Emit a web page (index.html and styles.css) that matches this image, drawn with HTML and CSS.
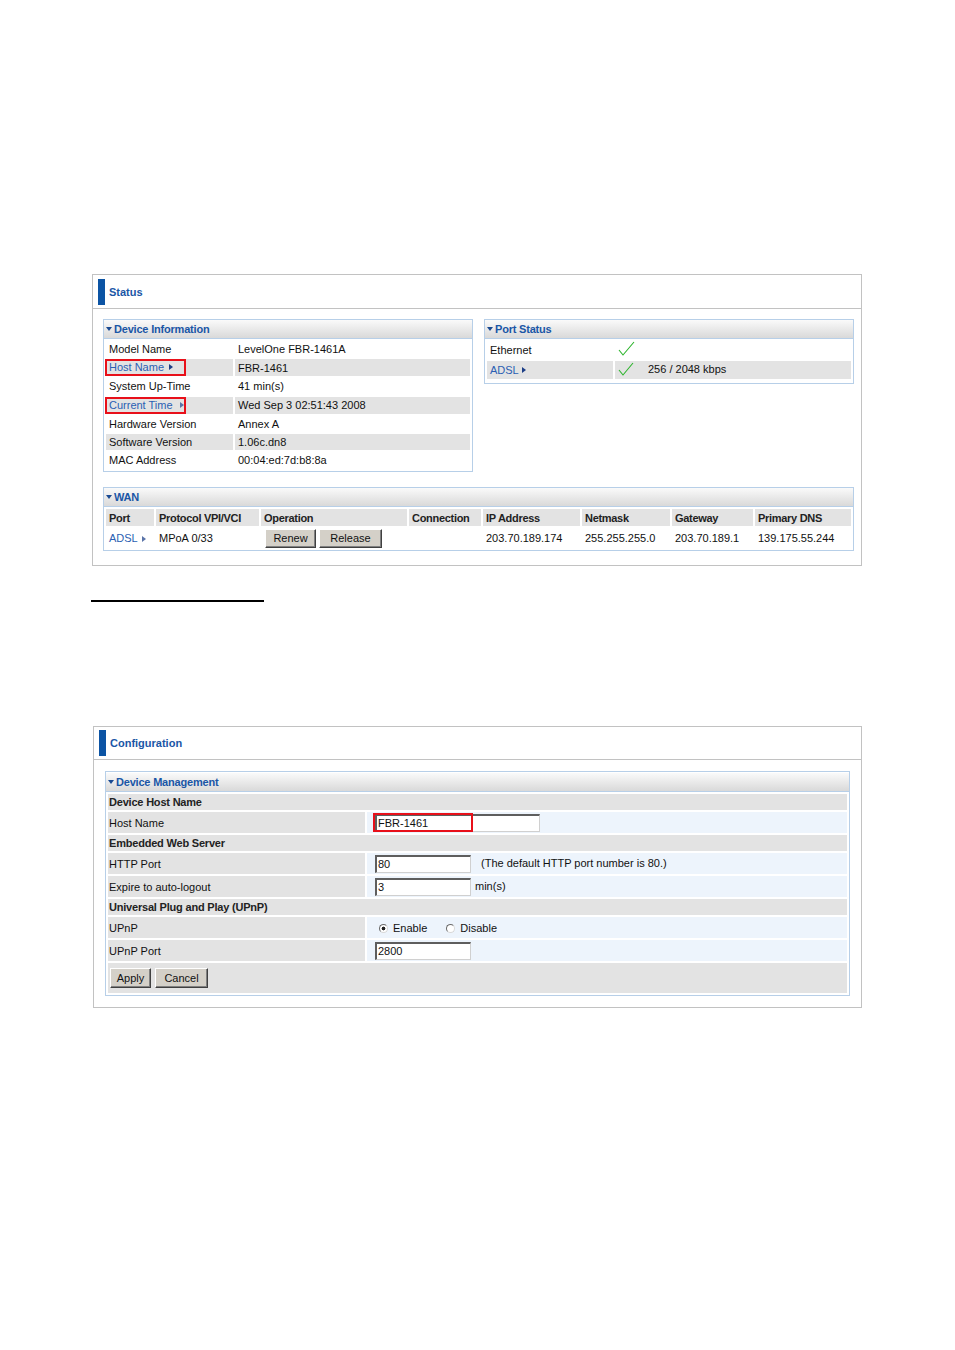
FILE: index.html
```html
<!DOCTYPE html>
<html lang="en">
<head>
    <meta charset="UTF-8">
    <meta name="viewport" content="width=device-width, initial-scale=1.0">
    <title>Status and Configuration</title>
    <link rel="stylesheet" href="styles.css">
</head>
<body>
<div class="page">

    <!-- Status page -->
    <div class="panel status">
        <div class="panel-title"><span class="bar"></span>Status</div>
        <div class="panel-body">
            <div class="top-row">
                <div class="box info">
                    <div class="box-head"><span class="tri"></span>Device Information</div>
                    <table class="grid info-grid">
                        <colgroup><col class="c-lbl"><col></colgroup>
                        <tr><td>Model Name</td><td>LevelOne FBR-1461A</td></tr>
                        <tr class="alt"><td><span class="mark"><span class="link">Host Name</span> <span class="arr"></span></span></td><td>FBR-1461</td></tr>
                        <tr><td>System Up-Time</td><td>41 min(s)</td></tr>
                        <tr class="alt"><td><span class="mark"><span class="link">Current Time</span> <span class="arr light"></span></span></td><td>Wed Sep 3 02:51:43 2008</td></tr>
                        <tr><td>Hardware Version</td><td>Annex A</td></tr>
                        <tr class="alt"><td>Software Version</td><td>1.06c.dn8</td></tr>
                        <tr><td>MAC Address</td><td>00:04:ed:7d:b8:8a</td></tr>
                    </table>
                </div>

                <div class="box port">
                    <div class="box-head"><span class="tri"></span>Port Status</div>
                    <table class="grid port-grid">
                        <colgroup><col class="c-port"><col></colgroup>
                        <tr>
                            <td>Ethernet</td>
                            <td><svg class="check" width="17" height="16" viewBox="0 0 17 16"><polyline points="1,9 5,14 16,1" fill="none" stroke="#2cb42c" stroke-width="1.1"/></svg></td>
                        </tr>
                        <tr class="alt">
                            <td><span class="link">ADSL</span><span class="arr tight"></span></td>
                            <td><svg class="check" width="17" height="16" viewBox="0 0 17 16"><polyline points="1,9 5,14 15,2" fill="none" stroke="#2cb42c" stroke-width="1.1"/></svg><span class="rate">256 / 2048 kbps</span></td>
                        </tr>
                    </table>
                </div>
            </div>

            <div class="box wan">
                <div class="box-head"><span class="tri"></span>WAN</div>
                <table class="grid wan-grid">
                    <tr class="head">
                        <th class="w-port">Port</th>
                        <th class="w-proto">Protocol VPI/VCI</th>
                        <th class="w-op">Operation</th>
                        <th class="w-conn">Connection</th>
                        <th class="w-ip">IP Address</th>
                        <th class="w-mask">Netmask</th>
                        <th class="w-gw">Gateway</th>
                        <th>Primary DNS</th>
                    </tr>
                    <tr class="data">
                        <td><span class="link">ADSL</span><span class="arr light"></span></td>
                        <td>MPoA 0/33</td>
                        <td class="ops"><button class="btn renew">Renew</button><button class="btn release">Release</button></td>
                        <td></td>
                        <td>203.70.189.174</td>
                        <td>255.255.255.0</td>
                        <td>203.70.189.1</td>
                        <td>139.175.55.244</td>
                    </tr>
                </table>
            </div>
        </div>
    </div>

    <div class="rule"></div>

    <!-- Configuration page -->
    <div class="panel config">
        <div class="panel-title"><span class="bar"></span>Configuration</div>
        <div class="panel-body">
            <div class="box mgmt">
                <div class="box-head"><span class="tri"></span>Device Management</div>
                <table class="grid form-grid">
                    <colgroup><col class="c-field"><col></colgroup>
                    <tr class="section"><td colspan="2">Device Host Name</td></tr>
                    <tr class="field">
                        <td>Host Name</td>
                        <td class="val"><span class="hl-wrap"><input class="txt long" type="text" value="FBR-1461"><span class="hl"></span></span></td>
                    </tr>
                    <tr class="section"><td colspan="2">Embedded Web Server</td></tr>
                    <tr class="field">
                        <td>HTTP Port</td>
                        <td class="val"><input class="txt" type="text" value="80"><span class="note">(The default HTTP port number is 80.)</span></td>
                    </tr>
                    <tr class="field">
                        <td>Expire to auto-logout</td>
                        <td class="val"><input class="txt" type="text" value="3"><span class="unit">min(s)</span></td>
                    </tr>
                    <tr class="section"><td colspan="2">Universal Plug and Play (UPnP)</td></tr>
                    <tr class="field">
                        <td>UPnP</td>
                        <td class="val radios">
                            <span class="radio on"></span><span class="opt">Enable</span>
                            <span class="radio"></span><span class="opt">Disable</span>
                        </td>
                    </tr>
                    <tr class="field">
                        <td>UPnP Port</td>
                        <td class="val"><input class="txt" type="text" value="2800"></td>
                    </tr>
                    <tr class="actions">
                        <td colspan="2"><button class="btn apply">Apply</button><button class="btn cancel">Cancel</button></td>
                    </tr>
                </table>
            </div>
        </div>
    </div>

</div>
</body>
</html>
```

FILE: styles.css
```css
body {
    margin: 0;
    font-family: "Liberation Sans", Arial, sans-serif;
    font-size: 11px;
    color: #111;
    background-color: #fff;
}

.page {
    padding: 274px 0 0 92px;
}

/* Outer page panels */
.panel {
    border: 1px solid #c2c2c2;
}

.status {
    width: 768px;
}

.config {
    width: 767px;
    margin-left: 1px;
}

.panel-title {
    display: flex;
    align-items: center;
    height: 33px;
    padding-left: 5px;
    border-bottom: 1px solid #c2c2c2;
    font-weight: bold;
    color: #1a56a6;
}

.config .panel-title {
    height: 32px;
}

.panel-title .bar {
    width: 7px;
    height: 26px;
    background-color: #0c54a4;
    margin-right: 4px;
}

.status .panel-body {
    padding: 10px 7px 14px 10px;
}

.config .panel-body {
    padding: 11px;
}

.top-row {
    display: flex;
    align-items: flex-start;
    margin-bottom: 15px;
}

/* Boxes with a grey gradient head */
.box {
    border: 1px solid #b7cfe8;
    background-color: #fff;
}

.box-head {
    height: 18px;
    line-height: 18px;
    padding-left: 2px;
    border-bottom: 1px solid #b7cfe8;
    background: linear-gradient(#fafafa, #d9d9d9);
    color: #1a56a6;
    font-weight: bold;
    letter-spacing: -0.2px;
}

.tri {
    display: inline-block;
    width: 0;
    height: 0;
    border-left: 3px solid transparent;
    border-right: 3px solid transparent;
    border-top: 4px solid #1a4a92;
    vertical-align: middle;
    margin: -3px 2px 0 0;
}

.info {
    width: 368px;
    padding-bottom: 1px;
}

.port {
    width: 368px;
    margin-left: 11px;
    padding-bottom: 2px;
}

.grid {
    width: 100%;
    border-collapse: separate;
    border-spacing: 2px;
    table-layout: fixed;
}

.grid td,
.grid th {
    padding: 0 0 0 3px;
    white-space: nowrap;
    overflow: visible;
    text-align: left;
    font-weight: normal;
}

.grid .alt td {
    background-color: #e3e3e3;
}

.info-grid .c-lbl {
    width: 127px;
}

.info-grid td {
    height: 16.3px;
}

.port-grid .c-port {
    width: 126px;
}

.port-grid td {
    height: 18px;
}

.link {
    color: #2b5fb3;
}

.arr {
    display: inline-block;
    width: 0;
    height: 0;
    border-top: 3px solid transparent;
    border-bottom: 3px solid transparent;
    border-left: 4px solid #1c3e86;
    vertical-align: middle;
    margin: -2px 0 0 2px;
}

.arr.light {
    border-left-color: #5a74a8;
    margin-left: 4px;
}

.arr.tight {
    margin-left: 3px;
}

.mark {
    display: inline-block;
    width: 75px;
    height: 13px;
    line-height: 13px;
    padding-left: 2px;
    margin-left: -4px;
    border: 2px solid #e8101a;
}

.check {
    vertical-align: middle;
    margin-top: -2px;
}

.rate {
    margin-left: 13px;
}

/* WAN table */
.wan-grid .head th {
    height: 17px;
    background-color: #e3e3e3;
    font-weight: bold;
    letter-spacing: -0.3px;
    color: #222;
}

.wan-grid .data td {
    height: 20px;
}

.w-port { width: 45px; }
.w-proto { width: 100px; }
.w-op { width: 143px; }
.w-conn { width: 69px; }
.w-ip { width: 94px; }
.w-mask { width: 85px; }
.w-gw { width: 78px; }

.wan-grid td.ops {
    padding-left: 4px;
}

.btn {
    font-family: "Liberation Sans", Arial, sans-serif;
    font-size: 11px;
    color: #111;
    background-color: #d4d0c8;
    border: 1px solid;
    border-color: #fff #404040 #404040 #fff;
    box-shadow: inset -1px -1px #808080;
    height: 19px;
    padding: 0;
    vertical-align: middle;
}

.renew {
    width: 51px;
}

.release {
    width: 63px;
    margin-left: 3px;
}

/* Configuration form */
.mgmt {
    width: 743px;
    padding-top: 1px;
}

.form-grid .c-field {
    width: 257px;
}

.form-grid td {
    background-color: #e3e3e3;
    padding-left: 1px;
}

.form-grid .section td {
    height: 16px;
    font-weight: bold;
    letter-spacing: -0.2px;
    color: #222;
}

.form-grid .field td {
    height: 21px;
}

.form-grid .field td.val {
    background-color: #edf4fc;
    padding-left: 8px;
}

.form-grid .actions td {
    height: 30px;
}

.txt {
    box-sizing: border-box;
    width: 96px;
    height: 18px;
    padding: 0 0 0 1px;
    margin: 0;
    border-style: solid;
    border-width: 2px 1px 1px 2px;
    border-color: #5e5e5e #d0d0d0 #d0d0d0 #5e5e5e;
    font-family: "Liberation Sans", Arial, sans-serif;
    font-size: 11px;
    color: #111;
    background-color: #fff;
    vertical-align: middle;
}

.txt.long {
    width: 165px;
}

.hl-wrap {
    position: relative;
    display: inline-block;
    vertical-align: middle;
}

.hl {
    position: absolute;
    left: -2px;
    top: -1px;
    width: 96px;
    height: 15px;
    border: 2px solid #e8101a;
}

.note {
    margin-left: 10px;
}

.unit {
    margin-left: 4px;
}

.form-grid .field td.radios {
    padding-left: 12px;
}

.radio {
    display: inline-block;
    box-sizing: border-box;
    width: 9px;
    height: 9px;
    border-radius: 50%;
    border: 1px solid;
    border-color: #6a6a6a #d8d8d8 #d8d8d8 #6a6a6a;
    background-color: #fff;
    vertical-align: middle;
    margin-top: -2px;
}

.radio.on {
    background: radial-gradient(circle, #222 0, #222 1.6px, #fff 2.2px);
}

.opt {
    margin: 0 16px 0 5px;
}

.apply {
    width: 41px;
    height: 20px;
    margin-left: 1px;
}

.cancel {
    width: 53px;
    height: 20px;
    margin-left: 4px;
}

.rule {
    width: 173px;
    height: 2px;
    background-color: #000;
    margin: 34px 0 124px -1px;
}
```
